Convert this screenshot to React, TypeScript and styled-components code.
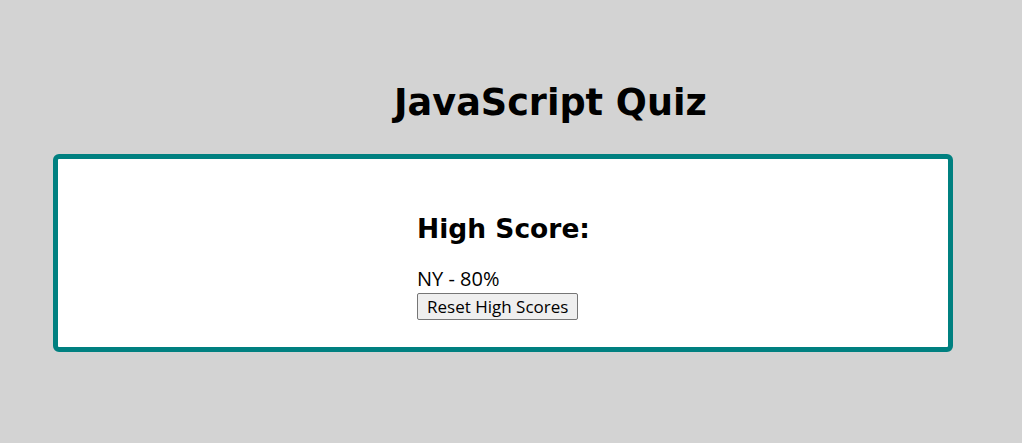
import React from "react";
import styled, { createGlobalStyle } from "styled-components";

const Global = createGlobalStyle`
  html, body { margin: 0; padding: 0; }
  body {
    background: #d3d3d3;
    font-family: "Open Sans", "DejaVu Sans", sans-serif;
    color: #000;
  }
`;

const Page = styled.div`
  width: 1022px;
  height: 443px;
  display: flex;
  flex-direction: column;
  align-items: flex-start;
`;

const Title = styled.h1`
  margin: 77px 0 0 394px;
  font-family: "DejaVu Sans", sans-serif;
  font-size: 36.6px;
  font-weight: 700;
  line-height: 52px;
`;

const Card = styled.section`
  box-sizing: border-box;
  margin: 25px 0 0 53px;
  width: 900px;
  height: 198px;
  background: #fff;
  border: 5px solid #008080;
  border-radius: 6px;
  padding: 50px 0 0 359px;
  display: flex;
  flex-direction: column;
  align-items: flex-start;
`;

const Heading = styled.h2`
  margin: 0;
  font-family: "DejaVu Sans", sans-serif;
  font-size: 26.5px;
  font-weight: 700;
  line-height: 40px;
`;

const ScoreLine = styled.div`
  margin-top: 18px;
  font-size: 20px;
  line-height: 24px;
`;

const ResetButton = styled.button`
  margin-top: 2px;
  font-family: "Open Sans", "DejaVu Sans", sans-serif;
  font-size: 17px;
  line-height: 22px;
  padding: 2px 9px 1px;
  background: #efefef;
  border: 1px solid #767676;
  border-radius: 2px;
  color: #000;
`;

export default function App() {
  return (
    <>
      <Global />
      <Page>
        <Title>JavaScript Quiz</Title>
        <Card>
          <Heading>High Score:</Heading>
          <ScoreLine>NY - 80%</ScoreLine>
          <ResetButton>Reset High Scores</ResetButton>
        </Card>
      </Page>
    </>
  );
}
